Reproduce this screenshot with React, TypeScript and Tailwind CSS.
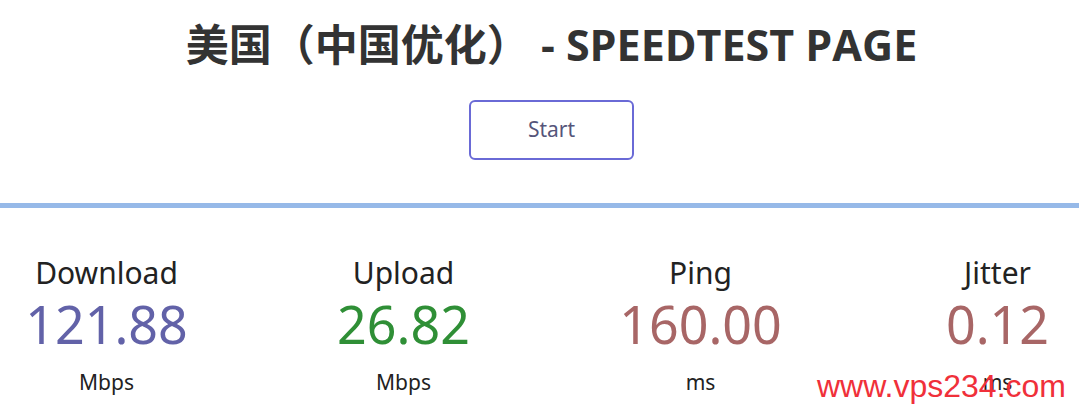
import React from "react";

const stats = [
  { label: "Download", value: "121.88", unit: "Mbps", color: "text-[#6262a8]" },
  { label: "Upload", value: "26.82", unit: "Mbps", color: "text-[#2f8f36]" },
  { label: "Ping", value: "160.00", unit: "ms", color: "text-[#a86666]" },
  { label: "Jitter", value: "0.12", unit: "ms", color: "text-[#a86666]" },
];

export default function App() {
  return (
    <div className="relative w-[1079px] h-[415px] overflow-hidden bg-white font-['Open_Sans','Noto_Sans_CJK_SC',sans-serif]">
      <div className="w-[1103px]">
        <h1 className="pt-[18px] text-center text-[43px] leading-[54px] font-bold text-[#333333] font-['Open_Sans','Noto_Sans_CJK_SC',sans-serif]">
          美国（中国优化） - SPEEDTEST PAGE
        </h1>
        <div className="mt-[28px] flex justify-center">
          <button className="w-[165px] h-[60px] rounded-[6px] border-2 border-[#6a6ad6] bg-white text-[21px] text-[#55557a] font-['Noto_Sans',sans-serif]">
            Start
          </button>
        </div>
      </div>
      <div className="mt-[43px] h-[5px] bg-[#96b9e8]" />
      <div className="ml-[-42px] mt-[45px] flex w-[1188px]">
        {stats.map((s) => (
          <div key={s.label} className="flex w-[297px] flex-col items-center font-['Noto_Sans',sans-serif]">
            <div className="text-[30px] leading-[40px] text-[#222222]">{s.label}</div>
            <div className={`text-[52px] leading-[62px] ${s.color}`}>{s.value}</div>
            <div className="mt-[13px] text-[21px] leading-[28px] text-[#222222]">{s.unit}</div>
          </div>
        ))}
      </div>
      <div className="absolute left-[817px] top-[366px] text-[32px] leading-[40px] text-[#f0303a] font-['Liberation_Sans',sans-serif]">
        www.vps234.com
      </div>
    </div>
  );
}
